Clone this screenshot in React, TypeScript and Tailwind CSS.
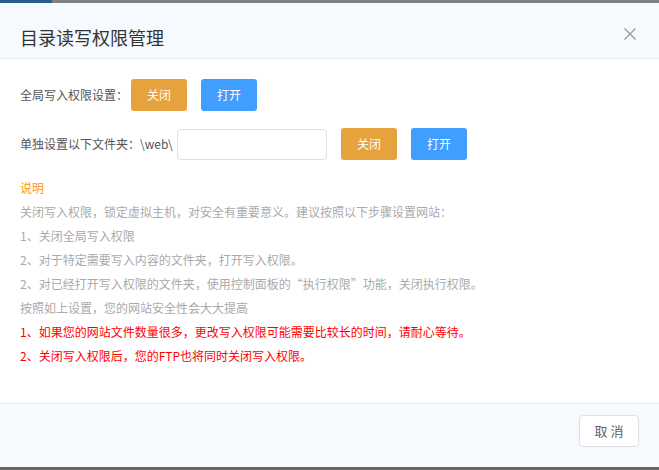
import React, { useState } from 'react';

const font = { fontFamily: '"Microsoft YaHei", "Noto Sans CJK SC", "Liberation Sans", sans-serif' };

const App: React.FC = () => {
  const [dir, setDir] = useState('');

  return (
    <div className="flex h-[470px] w-[659px] flex-col bg-white" style={font}>
      {/* top strip */}
      <div className="flex h-[3px] shrink-0 bg-[#808080]">
        <div className="w-[52px] bg-[#2d5a8f]" />
      </div>

      {/* header */}
      <div className="flex h-[56px] shrink-0 items-start justify-between border-b border-[#e8ecf0] bg-[#f6f9fe] pl-5 pr-[23px] pt-[22px]">
        <h2 className="text-[18px] leading-[24px] text-[#333]">目录读写权限管理</h2>
        <button className="mt-[3px] text-[#999]" aria-label="close">
          <svg width="12" height="12" viewBox="0 0 12 12" stroke="currentColor" strokeWidth="1.3" fill="none">
            <path d="M0.5 0.5 L11.5 11.5 M11.5 0.5 L0.5 11.5" />
          </svg>
        </button>
      </div>

      {/* body */}
      <div className="flex-1 px-5 pt-[20px] text-[12px]">
        <div className="flex h-[32px] items-center">
          <span className="w-[111px] text-[#555]">全局写入权限设置：</span>
          <button className="h-[32px] w-[56px] rounded-[3px] bg-[#e6a23c] text-white">关闭</button>
          <button className="ml-[14px] h-[32px] w-[56px] rounded-[3px] bg-[#409eff] text-white">打开</button>
        </div>

        <div className="mt-[17px] flex h-[32px] items-center">
          <span className="w-[157px] text-[#555]">单独设置以下文件夹：\web\</span>
          <input
            value={dir}
            onChange={(e) => setDir(e.target.value)}
            className="h-[31px] w-[150px] rounded-[4px] border border-[#dcdfe6] px-2 outline-none"
          />
          <button className="ml-[14px] h-[32px] w-[56px] rounded-[3px] bg-[#e6a23c] text-white">关闭</button>
          <button className="ml-[14px] h-[32px] w-[56px] rounded-[3px] bg-[#409eff] text-white">打开</button>
        </div>

        <div className="mt-[16px] leading-[24px]">
          <p className="text-[#f90]">说明</p>
          <p className="text-[#aaa]">关闭写入权限，锁定虚拟主机，对安全有重要意义。建议按照以下步骤设置网站：</p>
          <p className="text-[#aaa]">1、关闭全局写入权限</p>
          <p className="text-[#aaa]">2、对于特定需要写入内容的文件夹，打开写入权限。</p>
          <p className="text-[#aaa]">2、对已经打开写入权限的文件夹，使用控制面板的“执行权限”功能，关闭执行权限。</p>
          <p className="text-[#aaa]">按照如上设置，您的网站安全性会大大提高</p>
          <p className="text-[#f00]">1、如果您的网站文件数量很多，更改写入权限可能需要比较长的时间，请耐心等待。</p>
          <p className="text-[#f00]">2、关闭写入权限后，您的FTP也将同时关闭写入权限。</p>
        </div>
      </div>

      {/* footer */}
      <div className="flex h-[64px] shrink-0 items-start justify-end border-t border-[#e8ecf0] bg-[#f6f9fe] pr-[20px] pt-[11px]">
        <button className="h-[32px] w-[60px] rounded-[4px] border border-[#dcdfe6] bg-white text-[13px] text-[#606266]">
          取 消
        </button>
      </div>

      {/* bottom strip */}
      <div className="h-[3px] shrink-0 bg-[#666]" />
    </div>
  );
};

export default App;
